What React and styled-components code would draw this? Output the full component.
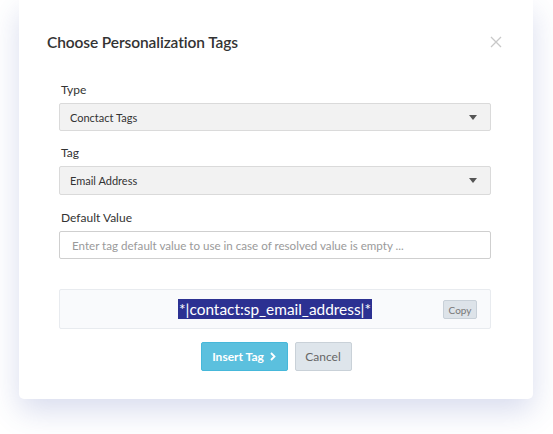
import React from "react";
import styled, { createGlobalStyle } from "styled-components";

const Global = createGlobalStyle`
  html, body { margin: 0; padding: 0; background: #ffffff; }
  body { font-family: Lato, "Open Sans", Arial, sans-serif; color: #333; }
  * { box-sizing: border-box; }
`;

const Page = styled.div`
  width: 553px;
  height: 434px;
  padding: 0 20px 0 19px;
  overflow: hidden;
`;

const Card = styled.div`
  width: 514px;
  height: 399px;
  background: #fff;
  border-radius: 0 0 5px 5px;
  box-shadow: 0 12px 30px rgba(60, 80, 170, 0.2);
  display: flex;
  flex-direction: column;
`;

const Header = styled.div`
  display: flex;
  align-items: center;
  justify-content: space-between;
  padding: 32px 30px 0 28px;
  height: 52px;
`;

const Title = styled.h3`
  margin: 0;
  font-size: 15.5px;
  font-weight: 600;
  color: #333;
  line-height: 20px;
  letter-spacing: -0.1px;
`;

const Close = styled.button`
  border: 0;
  background: none;
  padding: 0;
  width: 14px;
  height: 14px;
  display: flex;
  align-items: center;
  justify-content: center;
  cursor: pointer;
`;

const Body = styled.div`
  padding: 30px 42px 0 40px;
  display: flex;
  flex-direction: column;
`;

const Label = styled.label`
  display: block;
  font-size: 12px;
  line-height: 16px;
  color: #333;
  margin: ${(p) => p.$top || 0}px 0 5px 2px;
`;

const Select = styled.div`
  height: ${(p) => p.$h || 28}px;
  background: #f2f2f2;
  border: 1px solid #dadada;
  border-radius: 2px;
  display: flex;
  align-items: center;
  justify-content: space-between;
  padding: 0 13px 0 10px;
  font-size: 11px;
  color: #333;
`;

const Caret = styled.span`
  width: 0;
  height: 0;
  border-left: 4.5px solid transparent;
  border-right: 4.5px solid transparent;
  border-top: 5px solid #555;
`;

const Input = styled.input`
  height: 28px;
  width: 100%;
  border: 1px solid #cfcfcf;
  border-radius: 2px;
  padding: 0 12px;
  font-family: inherit;
  font-size: 11.6px;
  color: #333;
  outline: none;
  &::placeholder { color: #9a9a9a; }
`;

const TagBox = styled.div`
  margin-top: 30px;
  height: 40px;
  background: #f9fafc;
  border: 1px solid #e8ebef;
  border-radius: 2px;
  position: relative;
  display: flex;
  align-items: center;
  justify-content: center;
`;

const TagText = styled.span`
  font-size: 15.4px;
  line-height: 20px;
  background: #2c3192;
  color: #fff;
  padding: 0 1px;
`;

const CopyButton = styled.button`
  position: absolute;
  right: 13px;
  top: 10px;
  height: 19px;
  width: 34px;
  padding: 0;
  background: #dde3e9;
  border: 1px solid #c8d0d8;
  border-radius: 2px;
  font-family: inherit;
  font-size: 10px;
  color: #777;
`;

const Actions = styled.div`
  display: flex;
  justify-content: center;
  gap: 7px;
  margin-top: 13px;
  padding-left: 2px;
`;

const Button = styled.button`
  height: 29px;
  padding: 0;
  width: ${(p) => (p.$primary ? 87 : 57)}px;
  border-radius: 2px;
  font-family: inherit;
  font-size: 12px;
  font-weight: ${(p) => (p.$primary ? 700 : 400)};
  color: ${(p) => (p.$primary ? "#fff" : "#666")};
  background: ${(p) => (p.$primary ? "#5bc0de" : "#dee5eb")};
  border: 1px solid ${(p) => (p.$primary ? "#46b8da" : "#c9d1d8")};
  display: flex;
  align-items: center;
  justify-content: center;
  gap: 6px;
`;

export default function App() {
  return (
    <>
      <Global />
      <Page>
        <Card>
          <Header>
            <Title>Choose Personalization Tags</Title>
            <Close aria-label="Close">
              <svg width="12" height="12" viewBox="0 0 12 12">
                <path d="M1 1 L11 11 M11 1 L1 11" stroke="#c8c8c8" strokeWidth="1.3" />
              </svg>
            </Close>
          </Header>
          <Body>
            <Label>Type</Label>
            <Select>
              <span>Conctact Tags</span>
              <Caret />
            </Select>
            <Label $top={14}>Tag</Label>
            <Select $h={29}>
              <span>Email Address</span>
              <Caret />
            </Select>
            <Label $top={15}>Default Value</Label>
            <Input placeholder="Enter tag default value to use in case of resolved value is empty ..." />
            <TagBox>
              <TagText>*|contact:sp_email_address|*</TagText>
              <CopyButton>Copy</CopyButton>
            </TagBox>
            <Actions>
              <Button $primary>
                Insert Tag
                <svg width="6" height="9" viewBox="0 0 6 9">
                  <path d="M1 1 L4.5 4.5 L1 8" stroke="#fff" strokeWidth="1.8" fill="none" />
                </svg>
              </Button>
              <Button>Cancel</Button>
            </Actions>
          </Body>
        </Card>
      </Page>
    </>
  );
}
